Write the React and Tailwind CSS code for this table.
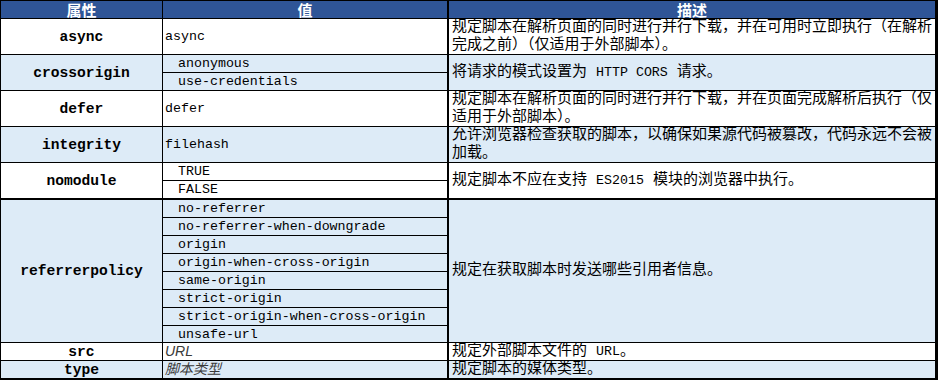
import React from 'react';

const mono = "font-['Liberation_Mono','Noto_Sans_CJK_SC',monospace]";

const rows = [
  {
    name: 'async',
    values: ['async'],
    single: true,
    desc: [['规定脚本在解析页面的同时进行并行下载，并在可用时立即执行（在解析'], ['完成之前）（仅适用于外部脚本）。']],
    bg: 'bg-white',
    h: 'h-[36px]',
  },
  {
    name: 'crossorigin',
    values: ['anonymous', 'use-credentials'],
    desc: [['将请求的模式设置为 ', { t: 'HTTP CORS' }, ' 请求。']],
    bg: 'bg-[#ddebf7]',
    h: 'h-[36px]',
  },
  {
    name: 'defer',
    values: ['defer'],
    single: true,
    desc: [['规定脚本在解析页面的同时进行并行下载，并在页面完成解析后执行（仅'], ['适用于外部脚本）。']],
    bg: 'bg-white',
    h: 'h-[36px]',
  },
  {
    name: 'integrity',
    values: ['filehash'],
    single: true,
    desc: [['允许浏览器检查获取的脚本，以确保如果源代码被篡改，代码永远不会被'], ['加载。']],
    bg: 'bg-[#ddebf7]',
    h: 'h-[36px]',
  },
  {
    name: 'nomodule',
    values: ['TRUE', 'FALSE'],
    desc: [['规定脚本不应在支持 ', { t: 'ES2015' }, ' 模块的浏览器中执行。']],
    bg: 'bg-white',
    h: 'h-[37px]',
    thick: true,
  },
  {
    name: 'referrerpolicy',
    values: [
      'no-referrer',
      'no-referrer-when-downgrade',
      'origin',
      'origin-when-cross-origin',
      'same-origin',
      'strict-origin',
      'strict-origin-when-cross-origin',
      'unsafe-url',
    ],
    desc: [['规定在获取脚本时发送哪些引用者信息。']],
    bg: 'bg-[#ddebf7]',
    h: 'h-[143px]',
  },
  {
    name: 'src',
    values: ['URL'],
    single: true,
    italic: true,
    desc: [['规定外部脚本文件的 ', { t: 'URL' }, '。']],
    bg: 'bg-white',
    h: 'h-[18px]',
  },
  {
    name: 'type',
    values: ['脚本类型'],
    single: true,
    italic: true,
    desc: [['规定脚本的媒体类型。']],
    bg: 'bg-[#ddebf7]',
    h: 'h-[17px]',
    last: true,
  },
];

function DescLine({ parts }) {
  return (
    <div className="h-[18px] leading-[18px] whitespace-nowrap">
      {parts.map((p, i) =>
        typeof p === 'string' ? (
          <span key={i}>{p}</span>
        ) : (
          <span key={i} className="text-[13.3px]">
            {p.t}
          </span>
        )
      )}
    </div>
  );
}

function Row({ row }) {
  const border = row.last ? '' : row.thick ? 'border-b-2 border-black' : 'border-b border-black';
  return (
    <div className={`flex ${row.bg} ${border} ${row.h} overflow-hidden`}>
      <div className={`w-[162px] shrink-0 border-r border-black flex items-center justify-center font-bold text-[14.6px] leading-[18px] text-black ${mono}`}>
        {row.name}
      </div>
      <div className={`w-[286px] shrink-0 border-r-2 border-black flex flex-col ${mono} text-[13.3px] leading-[17px] text-black`}>
        {row.single ? (
          <div
            className={`flex-1 min-h-0 flex items-center pl-[2px] ${
              row.italic ? "italic text-[#3a3a3a] font-['Liberation_Sans','Noto_Sans_CJK_SC',sans-serif] text-[14px]" : ''
            }`}
          >
            {row.values[0]}
          </div>
        ) : (
          row.values.map((v, i) =>
            i < row.values.length - 1 ? (
              <div key={v} className="h-[18px] shrink-0 flex items-center pl-[15px] border-b border-black">
                {v}
              </div>
            ) : (
              <div key={v} className="flex-1 min-h-0 flex items-center pl-[15px]">
                {v}
              </div>
            )
          )
        )}
      </div>
      <div className={`flex-1 min-w-0 overflow-hidden flex flex-col justify-center pl-[3px] text-[15px] text-black ${mono}`}>
        {row.desc.map((parts, i) => (
          <DescLine key={i} parts={parts} />
        ))}
      </div>
    </div>
  );
}

export default function App() {
  return (
    <div className="w-[938px] h-[380px] bg-white">
      <div className="w-[938px] border-t border-l border-r-[3px] border-b-[3px] border-black">
        <div className="flex h-[18px] bg-[#2f5597] border-b border-black text-white font-bold text-[15px] font-['Noto_Sans_CJK_SC',sans-serif] leading-[17px]">
          <div className="w-[162px] shrink-0 border-r border-black text-center">属性</div>
          <div className="w-[286px] shrink-0 border-r-2 border-black text-center">值</div>
          <div className="flex-1 text-center">描述</div>
        </div>
        {rows.map((r) => (
          <Row key={r.name} row={r} />
        ))}
      </div>
    </div>
  );
}
